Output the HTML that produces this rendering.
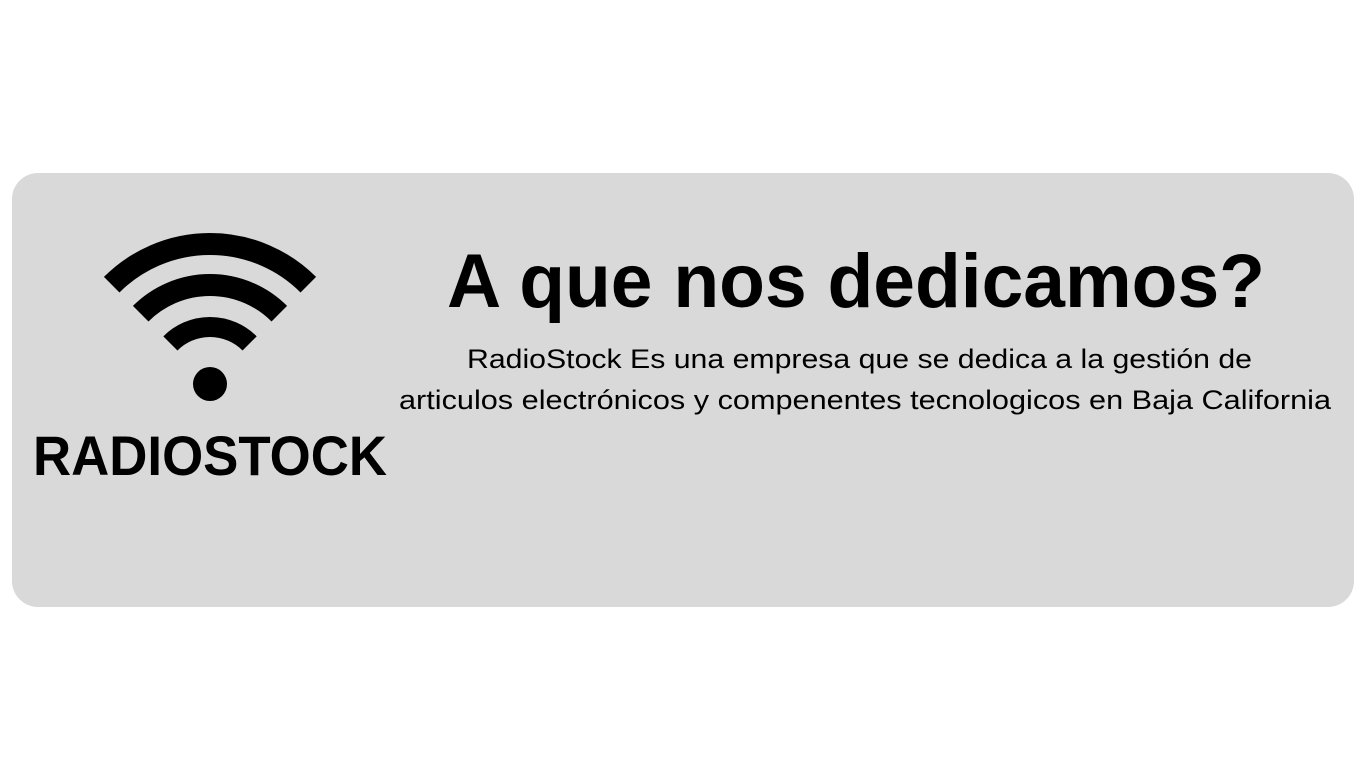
<!DOCTYPE html>
<html><head><meta charset="utf-8"><style>
html,body{margin:0;padding:0;background:#fff;width:1366px;height:768px;overflow:hidden}
svg{display:block}
</style></head><body>
<svg width="1366" height="768" viewBox="0 0 1366 768" xmlns="http://www.w3.org/2000/svg">
<rect x="12" y="173" width="1342" height="434" rx="26" fill="#d9d9d9"/>
<g fill="none" stroke="#000" stroke-width="22">
<path d="M111.7 284.7 A139 139 0 0 1 308.3 284.7"/>
<path d="M140.7 313.7 A98 98 0 0 1 279.3 313.7"/>
<path d="M170.4 343.4 A56 56 0 0 1 249.6 343.4" stroke-width="20"/>
</g>
<circle cx="210" cy="384" r="17" fill="#000"/>
<g font-family="Liberation Sans, sans-serif" fill="#000">
<text x="33" y="475" font-size="56" font-weight="bold" textLength="354" lengthAdjust="spacingAndGlyphs">RADIOSTOCK</text>
<text x="447" y="307" font-size="76" font-weight="bold" textLength="818" lengthAdjust="spacingAndGlyphs">A que nos dedicamos?</text>
<text x="467" y="368" font-size="27" textLength="785" lengthAdjust="spacingAndGlyphs">RadioStock Es una empresa  que se dedica a la gestión de</text>
<text x="399" y="409" font-size="27" textLength="932" lengthAdjust="spacingAndGlyphs">articulos electrónicos y compenentes tecnologicos en Baja California</text>
</g>
</svg>
</body></html>
